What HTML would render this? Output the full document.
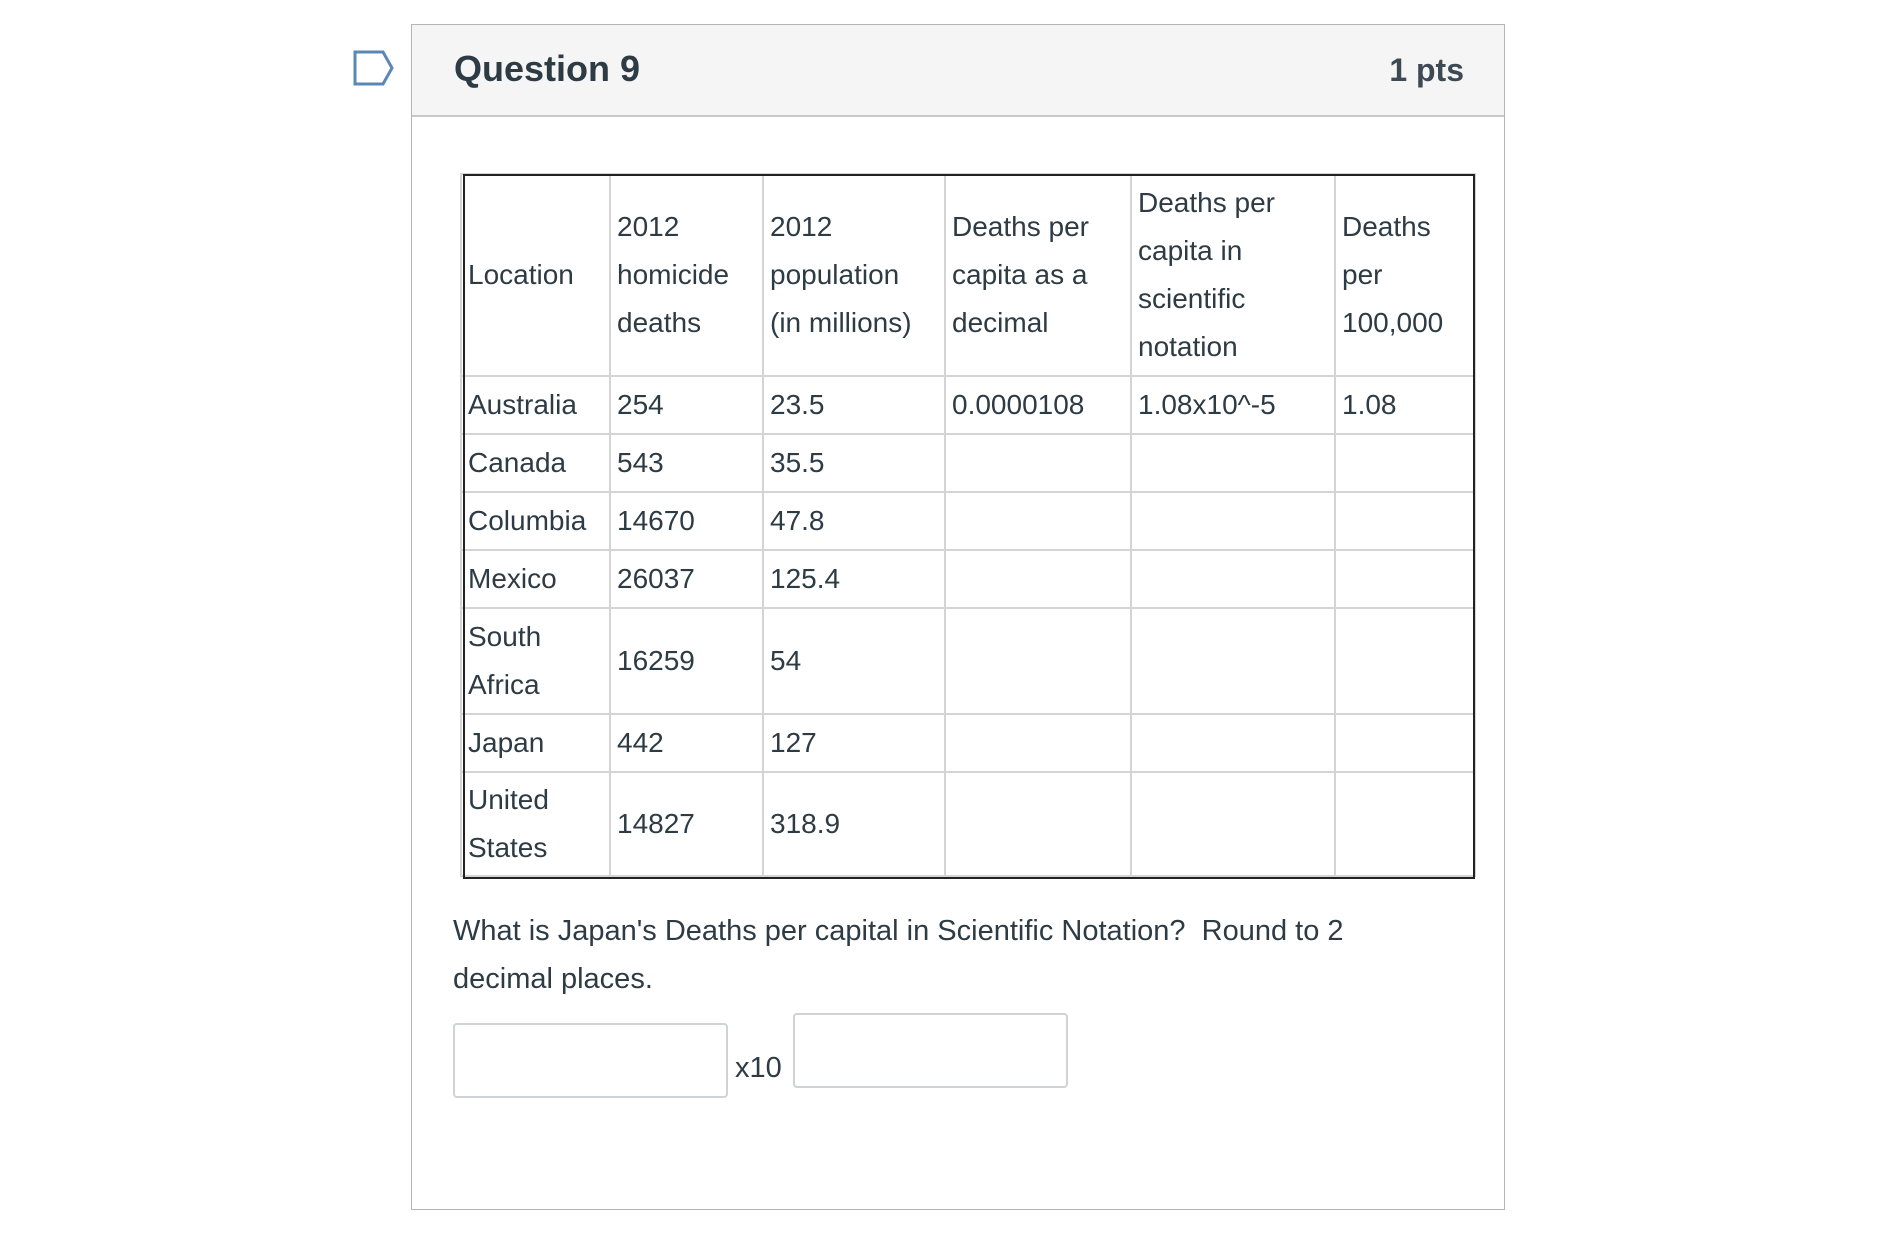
<!DOCTYPE html>
<html><head><meta charset="utf-8"><style>
body{margin:0;width:1892px;height:1242px;background:#fff;font-family:"Liberation Sans",sans-serif;color:#2d3b45;position:relative;overflow:hidden}
.box{position:absolute;left:411px;top:24px;width:1092px;height:1184px;border:1px solid #b5b5b5}
.hdr{position:absolute;left:0;top:0;right:0;height:90px;background:#f5f5f5;border-bottom:2px solid #c7c7c7}
.title{position:absolute;left:42px;top:23px;font-size:36px;font-weight:bold}
.pts{position:absolute;right:40px;top:27px;font-size:32px;font-weight:bold;color:#3d4a54}
table{position:absolute;left:460px;top:173px;border-collapse:collapse;font-size:28px;color:#2d3b45}
td{border:2px solid #d4d4d4;padding:0 0 0 6px;vertical-align:middle;line-height:48px;white-space:nowrap}
.frame{position:absolute;left:463px;top:174px;width:1008px;height:701px;border:2px solid #222}
.q{position:absolute;left:453px;top:907px;font-size:29px;line-height:48px;color:#2d3b45}
.in{position:absolute;border:2px solid #cfd3d6;border-radius:4px;background:#fff}
</style></head><body>
<svg style="position:absolute;left:353px;top:50px" width="42" height="36" viewBox="0 0 42 36"><path d="M2 2 H30 L39 18 L30 34 H2 Z" fill="none" stroke="#5b87b5" stroke-width="3"/></svg>
<div class="box"><div class="hdr"><div class="title">Question 9</div><div class="pts">1 pts</div></div></div>
<table>
<colgroup><col style="width:149px"><col style="width:153px"><col style="width:182px"><col style="width:186px"><col style="width:204px"><col style="width:140px"></colgroup>
<tr style="height:202px"><td>Location</td><td>2012<br>homicide<br>deaths</td><td>2012<br>population<br>(in millions)</td><td>Deaths per<br>capita as a<br>decimal</td><td>Deaths per<br>capita in<br>scientific<br>notation</td><td>Deaths<br>per<br>100,000</td></tr>
<tr style="height:58px"><td>Australia</td><td>254</td><td>23.5</td><td>0.0000108</td><td>1.08x10^-5</td><td>1.08</td></tr>
<tr style="height:58px"><td>Canada</td><td>543</td><td>35.5</td><td></td><td></td><td></td></tr>
<tr style="height:58px"><td>Columbia</td><td>14670</td><td>47.8</td><td></td><td></td><td></td></tr>
<tr style="height:58px"><td>Mexico</td><td>26037</td><td>125.4</td><td></td><td></td><td></td></tr>
<tr style="height:106px"><td>South<br>Africa</td><td>16259</td><td>54</td><td></td><td></td><td></td></tr>
<tr style="height:58px"><td>Japan</td><td>442</td><td>127</td><td></td><td></td><td></td></tr>
<tr style="height:104px"><td>United<br>States</td><td>14827</td><td>318.9</td><td></td><td></td><td></td></tr>
</table>
<div class="frame"></div>
<div class="q">What is Japan's Deaths per capital in Scientific Notation?&nbsp; Round to 2<br>decimal places.</div>
<div class="in" style="left:453px;top:1023px;width:271px;height:71px"></div>
<div style="position:absolute;left:735px;top:1052px;font-size:29px">x10</div>
<div class="in" style="left:793px;top:1013px;width:271px;height:71px"></div>
</body></html>
